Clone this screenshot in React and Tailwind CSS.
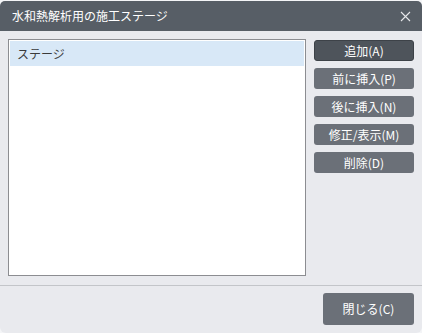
export default function App() {
  const buttons = ["前に挿入(P)", "後に挿入(N)", "修正/表示(M)", "削除(D)"];
  return (
    <div
      className="w-[422px] h-[333px] bg-[#f4f5f7] pt-px"
      style={{ fontFamily: '"Noto Sans CJK JP", "Noto Sans", sans-serif' }}
    >
      <div className="h-[332px] flex flex-col bg-[#e9eaee] rounded-t-[5px] rounded-b-[6px] overflow-hidden">
        <div className="h-[30px] shrink-0 bg-[#575e66] flex items-center justify-between pl-3 pr-[11px]">
          <span className="text-[12px] text-white leading-none">水和熱解析用の施工ステージ</span>
          <svg width="11" height="11" viewBox="0 0 11 11" className="text-[#e6e7ea]">
            <path d="M1 1L10 10M10 1L1 10" stroke="currentColor" strokeWidth="1.1" />
          </svg>
        </div>
        <div className="flex gap-2 pl-2 pr-2 pt-2 h-[254px]">
          <div className="w-[299px] h-[237px] border border-[#8c8d91] bg-white p-px">
            <div className="h-[25px] bg-[#d8e8f7] flex items-center pl-[7px] text-[12px] text-[#3a3a3a]">
              ステージ
            </div>
          </div>
          <div className="flex flex-col gap-[7px] pt-px">
            <button className="w-[100px] h-[21px] rounded-[3px] bg-[#4e545b] border border-[#3d4248] text-[12px] text-white leading-none">
              追加(A)
            </button>
            {buttons.map((b) => (
              <button
                key={b}
                className="w-[100px] h-[21px] rounded-[3px] bg-[#6b7078] text-[12px] text-white leading-none"
              >
                {b}
              </button>
            ))}
          </div>
        </div>
        <div className="h-px bg-[#c3c5c9]" />
        <div className="flex justify-end pr-2 pt-[7px]">
          <button className="w-[91px] h-[32px] rounded-[3px] bg-[#6b7078] text-[12px] text-white leading-none">
            閉じる(C)
          </button>
        </div>
      </div>
    </div>
  );
}
